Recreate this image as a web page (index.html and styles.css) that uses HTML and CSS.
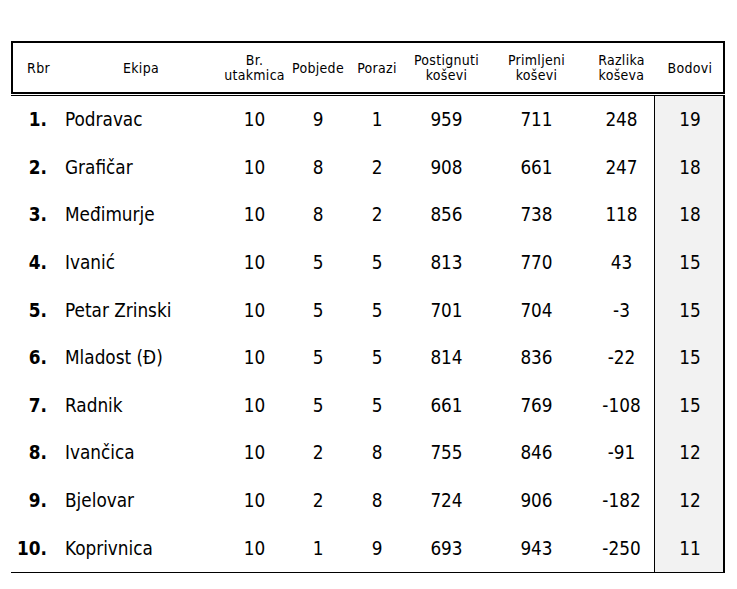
FILE: index.html
```html
<!DOCTYPE html>
<html lang="hr">
<head>
<meta charset="utf-8">
<title>Tablica</title>
<link rel="stylesheet" href="styles.css">
</head>
<body>
<div class="standings">
  <div class="head">
    <div class="hc">Rbr</div>
    <div class="hc">Ekipa</div>
    <div class="hc">Br.<br>utakmica</div>
    <div class="hc">Pobjede</div>
    <div class="hc">Porazi</div>
    <div class="hc">Postignuti<br>koševi</div>
    <div class="hc">Primljeni<br>koševi</div>
    <div class="hc">Razlika<br>koševa</div>
    <div class="hc hc-pts">Bodovi</div>
  </div>
  <div class="body">
    <div class="row"><div class="c rank">1.</div><div class="c team">Podravac</div><div class="c">10</div><div class="c">9</div><div class="c">1</div><div class="c">959</div><div class="c">711</div><div class="c">248</div><div class="c pts">19</div></div>
    <div class="row"><div class="c rank">2.</div><div class="c team">Grafičar</div><div class="c">10</div><div class="c">8</div><div class="c">2</div><div class="c">908</div><div class="c">661</div><div class="c">247</div><div class="c pts">18</div></div>
    <div class="row"><div class="c rank">3.</div><div class="c team">Međimurje</div><div class="c">10</div><div class="c">8</div><div class="c">2</div><div class="c">856</div><div class="c">738</div><div class="c">118</div><div class="c pts">18</div></div>
    <div class="row"><div class="c rank">4.</div><div class="c team">Ivanić</div><div class="c">10</div><div class="c">5</div><div class="c">5</div><div class="c">813</div><div class="c">770</div><div class="c">43</div><div class="c pts">15</div></div>
    <div class="row"><div class="c rank">5.</div><div class="c team">Petar Zrinski</div><div class="c">10</div><div class="c">5</div><div class="c">5</div><div class="c">701</div><div class="c">704</div><div class="c">-3</div><div class="c pts">15</div></div>
    <div class="row"><div class="c rank">6.</div><div class="c team">Mladost (Đ)</div><div class="c">10</div><div class="c">5</div><div class="c">5</div><div class="c">814</div><div class="c">836</div><div class="c">-22</div><div class="c pts">15</div></div>
    <div class="row"><div class="c rank">7.</div><div class="c team">Radnik</div><div class="c">10</div><div class="c">5</div><div class="c">5</div><div class="c">661</div><div class="c">769</div><div class="c">-108</div><div class="c pts">15</div></div>
    <div class="row"><div class="c rank">8.</div><div class="c team">Ivančica</div><div class="c">10</div><div class="c">2</div><div class="c">8</div><div class="c">755</div><div class="c">846</div><div class="c">-91</div><div class="c pts">12</div></div>
    <div class="row"><div class="c rank">9.</div><div class="c team">Bjelovar</div><div class="c">10</div><div class="c">2</div><div class="c">8</div><div class="c">724</div><div class="c">906</div><div class="c">-182</div><div class="c pts">12</div></div>
    <div class="row"><div class="c rank">10.</div><div class="c team">Koprivnica</div><div class="c">10</div><div class="c">1</div><div class="c">9</div><div class="c">693</div><div class="c">943</div><div class="c">-250</div><div class="c pts">11</div></div>
  </div>
</div>
</body>
</html>
```

FILE: styles.css
```css
html, body {
  margin: 0;
  padding: 0;
  background: #ffffff;
}

body {
  font-family: "DejaVu Sans Condensed", "DejaVu Sans", sans-serif;
  font-stretch: condensed;
  color: #000000;
}

.standings {
  margin: 41px 0 0 11px;
  width: 714px;
}

.head {
  box-sizing: border-box;
  height: 53px;
  border: 2px solid #000000;
  display: grid;
  grid-template-columns: 51px 154px 73px 54px 64px 75px 105px 65px 69px;
}

.hc {
  display: flex;
  align-items: center;
  justify-content: center;
  text-align: center;
  font-size: 14px;
  letter-spacing: 0.3px;
  line-height: 15px;
  padding-top: 1px;
  white-space: nowrap;
}

.hc-pts {
  padding-left: 3px;
}

.body {
  margin-top: 1px;
  border-top: 1px solid #000000;
  border-bottom: 1px solid #000000;
  border-right: 2px solid #000000;
}

.row {
  display: grid;
  grid-template-columns: 53px 154px 73px 54px 64px 75px 105px 65px 69px;
  height: 47.6px;
}

.c {
  display: flex;
  align-items: center;
  justify-content: center;
  font-size: 18.8px;
}

.c.rank {
  justify-content: flex-end;
  padding-right: 17px;
  font-weight: bold;
}

.c.team {
  justify-content: flex-start;
  padding-left: 1px;
}

.c.pts {
  background: #f2f2f2;
  border-left: 1px solid #000000;
  padding-left: 2px;
}
```
